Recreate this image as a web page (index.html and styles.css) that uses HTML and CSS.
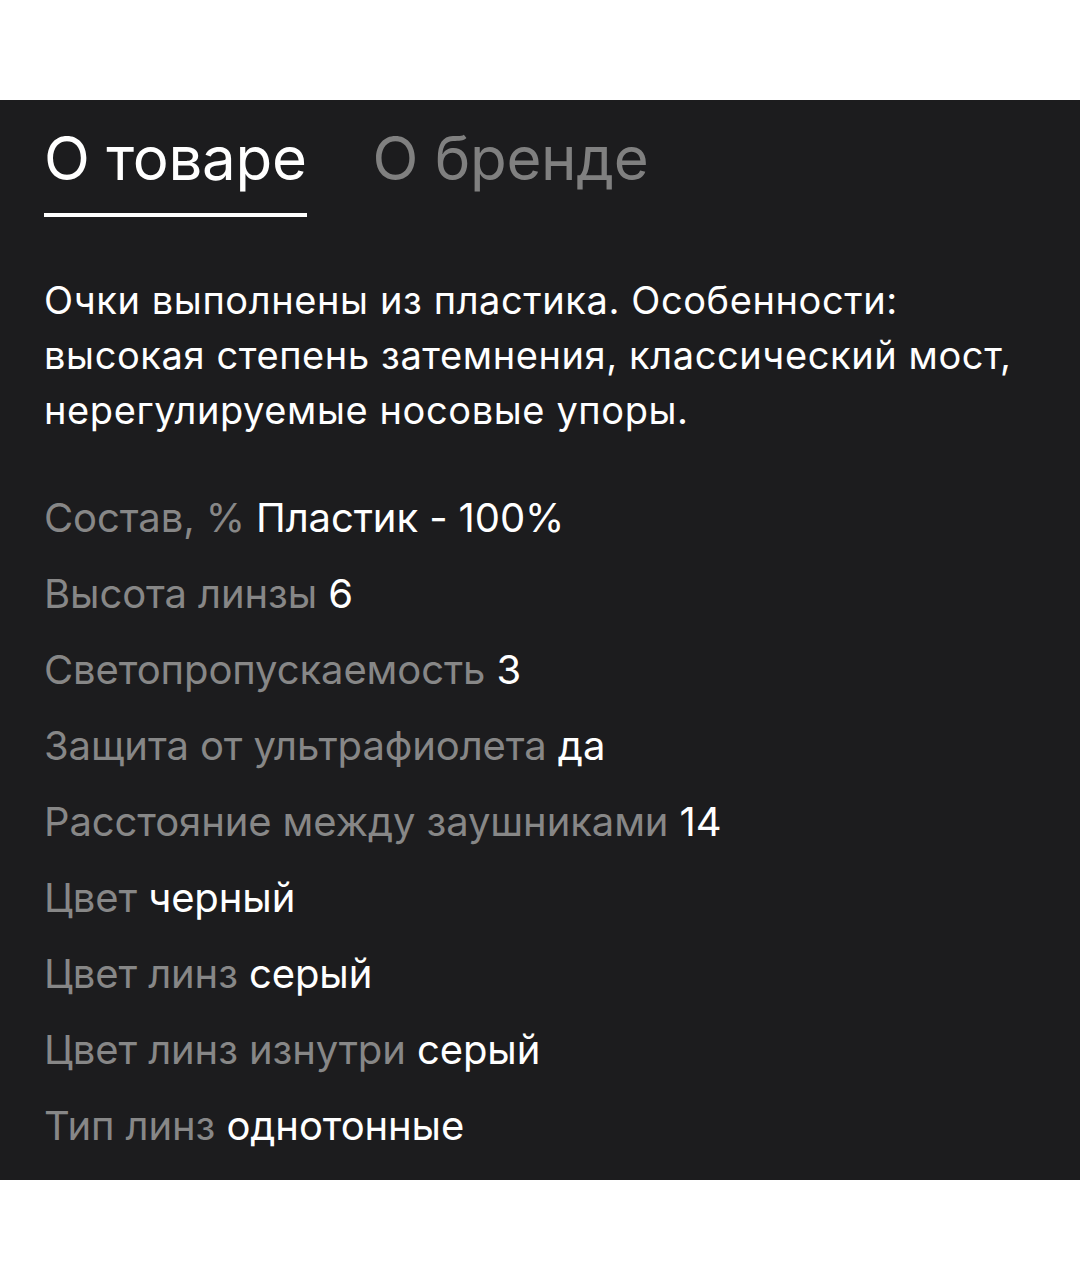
FILE: index.html
```html
<!DOCTYPE html>
<html lang="ru">
<head>
<meta charset="utf-8">
<link rel="stylesheet" href="styles.css">
</head>
<body>
<section class="panel">
  <nav class="tabs">
    <div class="tab active">О товаре</div>
    <div class="tab">О бренде</div>
  </nav>
  <p class="desc">Очки выполнены из пластика. Особенности: высокая степень затемнения, классический мост, нерегулируемые носовые упоры.</p>
  <ul class="specs">
    <li><span class="k">Состав, %</span> <span class="v">Пластик - 100%</span></li>
    <li><span class="k">Высота линзы</span> <span class="v">6</span></li>
    <li><span class="k">Светопропускаемость</span> <span class="v">3</span></li>
    <li><span class="k">Защита от ультрафиолета</span> <span class="v">да</span></li>
    <li><span class="k">Расстояние между заушниками</span> <span class="v">14</span></li>
    <li><span class="k">Цвет</span> <span class="v">черный</span></li>
    <li><span class="k">Цвет линз</span> <span class="v">серый</span></li>
    <li><span class="k">Цвет линз изнутри</span> <span class="v">серый</span></li>
    <li><span class="k">Тип линз</span> <span class="v">однотонные</span></li>
  </ul>
</section>
</body>
</html>
```
FILE: styles.css
```css
html, body {
  margin: 0;
  padding: 0;
  background: #ffffff;
}
body {
  padding-top: 100px;
  padding-bottom: 100px;
  font-family: Inter, "Noto Sans", sans-serif;
}
.panel {
  background: #1c1c1e;
  height: 1080px;
  box-sizing: border-box;
  padding: 0 44px;
  color: #ffffff;
}
.tabs {
  display: flex;
  gap: 66px;
  padding-top: 23px;
}
.tab {
  font-size: 60px;
  line-height: 70px;
  color: #808080;
  padding-bottom: 20px;
  border-bottom: 4px solid transparent;
  letter-spacing: -0.3px;
}
.tab.active {
  color: #ffffff;
  border-bottom-color: #ffffff;
}
.desc {
  margin: 56px 0 0;
  font-size: 38px;
  line-height: 55px;
  letter-spacing: 0.6px;
}
.specs {
  list-style: none;
  margin: 42px 0 0;
  padding: 0;
}
.specs li {
  font-size: 40px;
  line-height: 76px;
  letter-spacing: -0.1px;
}
.k {
  color: #878787;
}
.v {
  color: #ffffff;
}
```
